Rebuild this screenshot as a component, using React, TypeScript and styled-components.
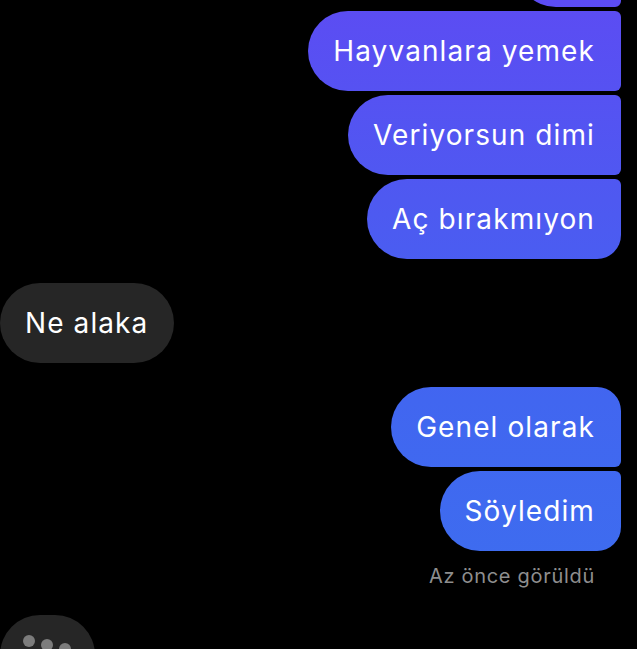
import React from "react";
import styled, { createGlobalStyle } from "styled-components";

const Global = createGlobalStyle`
  html, body {
    margin: 0;
    padding: 0;
    background: #000;
    overflow: hidden;
  }
  body {
    font-family: Inter, "Noto Sans", "Liberation Sans", sans-serif;
  }
`;

const Screen = styled.div`
  width: 637px;
  height: 649px;
  overflow: hidden;
  background: #000;
`;

const Thread = styled.div`
  display: flex;
  flex-direction: column;
  padding: 0 16px 0 0;
  margin-top: -73px;
`;

const Group = styled.div<{ $side: "in" | "out" }>`
  display: flex;
  flex-direction: column;
  align-items: ${(p) => (p.$side === "out" ? "flex-end" : "flex-start")};
  gap: 4px;
  margin-bottom: 24px;
`;

const Bubble = styled.div<{ $side: "in" | "out"; $first?: boolean; $last?: boolean; $w?: number }>`
  height: 80px;
  ${(p) => (p.$w ? `width: ${p.$w}px;` : "")}
  box-sizing: border-box;
  display: flex;
  align-items: center;
  padding: 0 26px 0 25px;
  font-size: 28px;
  letter-spacing: 1.1px;
  color: #fff;
  white-space: nowrap;
  background: ${(p) =>
    p.$side === "out"
      ? "linear-gradient(180deg, #5c4cf3 0px, #4e59f1 200px, #4166f0 400px, #3c6fef 649px) fixed"
      : "#262626"};
  border-radius: ${(p) =>
    p.$side === "in"
      ? "40px"
      : `40px ${p.$first ? "24px" : "6px"} ${p.$last ? "24px" : "6px"} 40px`};
`;

const Seen = styled.div`
  align-self: flex-end;
  margin: 9px 26px 0 0;
  font-size: 20px;
  line-height: 24px;
  color: #8e8e8e;
  letter-spacing: 0.7px;
`;

const Typing = styled.div`
  margin-top: 3px;
  width: 95px;
  height: 80px;
  border-radius: 40px;
  background: #262626;
  display: flex;
  gap: 6px;
  padding: 20px 0 0 23px;
  box-sizing: border-box;
`;

const Dot = styled.span<{ $drop: number }>`
  width: 12px;
  height: 12px;
  border-radius: 50%;
  background: #7c7c7c;
  margin-top: ${(p) => p.$drop}px;
`;

export default function App() {
  return (
    <Screen>
      <Global />
      <Thread>
        <Group $side="out">
          {/* earlier message, scrolled out of view */}
          <Bubble $side="out" $first $w={105} aria-hidden />
          <Bubble $side="out">Hayvanlara yemek</Bubble>
          <Bubble $side="out">Veriyorsun dimi</Bubble>
          <Bubble $side="out" $last>Aç bırakmıyon</Bubble>
        </Group>
        <Group $side="in">
          <Bubble $side="in">Ne alaka</Bubble>
        </Group>
        <Group $side="out">
          <Bubble $side="out" $first>Genel olarak</Bubble>
          <Bubble $side="out" $last>Söyledim</Bubble>
          <Seen>Az önce görüldü</Seen>
        </Group>
      </Thread>
      <Typing>
        <Dot $drop={0} />
        <Dot $drop={4} />
        <Dot $drop={8} />
      </Typing>
    </Screen>
  );
}
